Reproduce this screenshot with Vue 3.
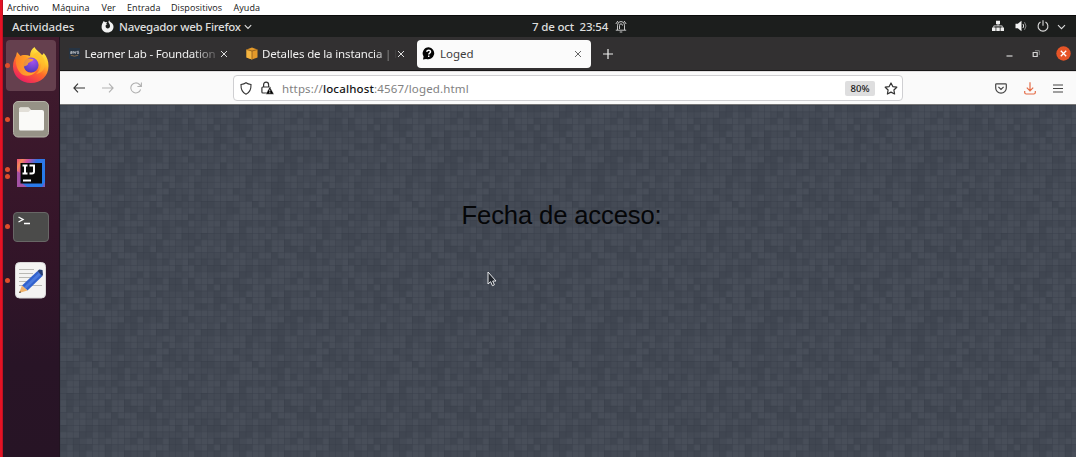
<script setup>
const menus = [
  { t: 'Archivo', w: 45 }, { t: 'Máquina', w: 49.5 }, { t: 'Ver', w: 25.5 },
  { t: 'Entrada', w: 44 }, { t: 'Dispositivos', w: 62.5 }, { t: 'Ayuda', w: 40 }
]
const cols = 25
const rows = 25
const cell = 6.4
let seed = 4711
const next = () => (seed = (seed * 48271) % 2147483647) / 2147483647
const light = []
const dark = []
for (let r = 0; r < rows; r++) {
  for (let c = 0; c < cols; c++) {
    const v = next()
    const d = `M${(c * cell).toFixed(1)} ${(r * cell).toFixed(1)}h6.4v6.4h-6.4z`
    if (v < 0.28) dark.push(d)
    else if (v > 0.64) light.push(d)
  }
}
const lightPath = light.join('')
const darkPath = dark.join('')
</script>

<template>
  <div class="screen">
    <div class="edge"></div>
    <div class="desktop">
      <nav class="menubar">
        <span v-for="m in menus" :key="m.t" :style="{ width: m.w + 'px' }">{{ m.t }}</span>
      </nav>

      <header class="topbar">
        <span class="act">Actividades</span>
        <svg class="fxmini" width="13" height="13" viewBox="0 0 13 13">
          <path d="M2.700.9 4.200 2.300C5 1.900 5.600 1.900 6.200 2L5.100 3.400 6.400 4.300C5.200 4.400 4.600 5.100 4.600 6.200c0 1.300.9 2.200 2.100 2.200 1.400 0 2.300-1 2.300-2.400C9 4.400 8 3.500 7.600 2.600 7.300 1.900 7.700.9 8.200.3c.3 1.500 1.300 1.700 2.200 2.400 1.300 1 2.100 2.300 2.100 4.100 0 3.300-2.600 5.800-5.900 5.800S.6 10.200.6 6.900C.6 4.500 1.600 2.800 2.700.9z" fill="#f2f2f2" />
        </svg>
        <span class="app">Navegador web Firefox</span>
        <svg class="chev" width="8" height="6" viewBox="0 0 8 6"><path d="M.8 1.200 4 4.500 7.200 1.200" fill="none" stroke="#ddd" stroke-width="1.100" /></svg>
        <span class="date">7 de oct&nbsp; 23:54</span>
        <svg class="bell" width="12" height="13" viewBox="0 0 12 13" fill="none" stroke="#d8d8d8">
          <path d="M.8 10.200h10.400M2.500 10V5.200a3.500 3.700 0 0 1 7 0V10M4.500 9V5.500a1.500 1.700 0 0 1 3 0M4.700 12h2.600M.8 4 2.800 1M11.200 4 9.200 1" stroke-width=".9" />
        </svg>
        <div class="tray">
          <svg width="12" height="12" viewBox="0 0 12 12"><path d="M4 .8h4v3.400H4zM0 7.600h3.600V11H0zM4.300 7.600h3.500V11H4.300zM8.500 7.600H12V11H8.500z" fill="#eee" /><path d="M6 4v2M1.800 8V5.900h8.400V8" fill="none" stroke="#ddd" stroke-width=".9" /></svg>
          <svg width="13" height="12" viewBox="0 0 13 12"><path d="M.5 3.800h2.300L6.500.8v10.400L2.800 8.200H.5z" fill="#f2f2f2" /><path d="M8 4q1.300 2 0 4" fill="none" stroke="#ddd" /><path d="M9.500 2.200q3 3.800 0 7.600" fill="none" stroke="#8b8b8b" /></svg>
          <svg width="12" height="12" viewBox="0 0 12 12" fill="none" stroke="#ddd" stroke-width="1.100"><path d="M3.500 2a4.900 4.900 0 1 0 5 0M6 .3v5.500" /></svg>
          <svg width="9" height="6" viewBox="0 0 9 6"><path d="M1 1.200 4.500 4.700 8 1.200" fill="none" stroke="#ddd" stroke-width="1.100" /></svg>
        </div>
      </header>

      <div class="work">
        <aside class="dock">
          <div class="slot current">
            <i class="dots"><b></b></i>
            <svg width="38" height="40" viewBox="0 0 38 40">
              <defs>
                <linearGradient id="flame" x1=".85" y1=".05" x2=".3" y2="1">
                  <stop offset="0" stop-color="#fff04d" /><stop offset=".3" stop-color="#ffc52b" /><stop offset=".58" stop-color="#ff6a2a" /><stop offset="1" stop-color="#ed1d62" />
                </linearGradient>
                <radialGradient id="globe" cx=".6" cy=".25" r=".8"><stop offset="0" stop-color="#a553ee" /><stop offset="1" stop-color="#4938b6" /></radialGradient>
                <linearGradient id="fox" x1="0" y1="0" x2="1" y2=".5"><stop offset="0" stop-color="#ff8426" /><stop offset="1" stop-color="#ffb629" /></linearGradient>
              </defs>
              <path d="M22.500 2C23.500 5 28 7 30 10c1.400-.4 1.700-2 1.700-2 3.500 4 4.800 8 4.800 13 0 10-7.500 17-17.500 17S1 31 1 21.500c0-5 1.800-8.500 3-10.500l1-4 3.500 4C10.500 9.500 15 9.500 18 11c0-4 1.500-7 4.500-9z" fill="url(#flame)" />
              <circle cx="19" cy="20" r="7.600" fill="url(#globe)" />
              <path d="M4.500 10.500 8.500 11c3-1.500 5.500-.8 7.500 2.200l5.500 1c-.5 2.300-4.500 2.500-5.500 4.300.2 2-2.500 2-4 3 .6 6 7 8 12 5-4 5-12 6-16 1C4 23 3 16 4.500 10.500z" fill="url(#fox)" opacity=".85" />
              <path d="M21 11c4 1 6.500 4 6.500 9 1-1 1-4 .5-6 2 6 0 12-4 15 6-1 9-5 9-10 0-6-4-9-6.500-12-2 0-4 1-5.500 4z" fill="#ffbd2c" opacity=".6" />
            </svg>
          </div>
          <div class="slot">
            <i class="dots"><b></b></i>
            <svg width="36" height="37" viewBox="0 0 36 37"><rect x=".5" y=".5" width="35" height="35.500" rx="4.500" fill="#969286" stroke="#b6b3a8" /><path d="M6 8q0-1.500 1.500-1.500h8L18 9h11q2 0 2 2v17q0 1.500-1.500 1.500h-22Q6 29.500 6 28z" fill="#fafaf8" /><path d="M6 8q0-1.500 1.500-1.500h8L17.500 9l-2 2H6z" fill="#e2dfd8" /></svg>
          </div>
          <div class="slot">
            <i class="dots two"><b></b><b></b></i>
            <svg width="28" height="28" viewBox="0 0 28 28">
              <defs><linearGradient id="ij" x1="0" y1="0" x2="1" y2=".6"><stop offset="0" stop-color="#e94a7c" /><stop offset=".15" stop-color="#f58959" /><stop offset=".3" stop-color="#d24f9f" /><stop offset=".55" stop-color="#3275e5" /><stop offset="1" stop-color="#267bea" /></linearGradient></defs>
              <path d="M0 0h28v28H0z" fill="url(#ij)" /><path d="M0 12 3 14v9l7 5H0z" fill="#a552a4" /><path d="M16 28h9l3-5v5z" fill="#795bb8" /><path d="M3.500 4H25v20.500H3.500z" fill="#090909" />
              <path d="M5.500 6.500h5M8 6.500v8M5.500 14.500h5M12.500 6.500h4.500v6q0 2-2 2h-2.500M6 21.500h8" fill="none" stroke="#fff" stroke-width="2" />
            </svg>
          </div>
          <div class="slot">
            <i class="dots"><b></b></i>
            <svg width="36" height="30" viewBox="0 0 36 30"><rect x=".5" y=".5" width="35" height="29" rx="3.500" fill="#4b4b4a" stroke="#686766" /><path d="m5.500 5 4.500 2.500L5.500 10M11 11.500h6" fill="none" stroke="#fff" stroke-width="1.400" /></svg>
          </div>
          <div class="slot">
            <i class="dots"><b></b></i>
            <svg width="31" height="37" viewBox="0 0 31 37"><rect x=".5" y=".5" width="30" height="35.500" rx="4" fill="#f4f3f2" stroke="#d9d7d8" /><path d="M4 7.500h15M4 11.500h14M4 15.500h12M4 19.500h9M4 23.500h23" stroke="#b9b8b4" stroke-width="1.200" /><path d="m22.500 9 5 5-15 14.500-5.500-5z" fill="#3161cd" /><path d="m24 10.500 2 2-15 14.300-2-1.700z" fill="#4a79dd" /><path d="m22.500 9 1.700-1.500 3.300.5.5 5-1 1z" fill="#243d73" /><path d="m7 23.500 5.500 5L4 31z" fill="#efb16a" /><path d="m5 29-1 2 2-.6z" fill="#333" /></svg>
          </div>
        </aside>

        <main class="browser">
          <div class="tabs">
            <div class="tab one">
              <svg width="11" height="11" viewBox="0 0 11 11"><rect width="11" height="11" fill="#263342" /><path d="M1.500 3.500h1.700v2H1.500v-1h1.700M4.300 3l.6 2.500.8-1.800.8 1.800.6-2.500M9.900 3.300H8.300v1h1.400v1.200H8.100" fill="none" stroke="#c7ccd1" stroke-width=".7" /><path d="M1.800 7.200q3.700 2 7.400 0" fill="none" stroke="#9c7545" stroke-width=".8" /></svg>
              <span class="label t1">Learner Lab - Foundation</span>
              <svg class="x" width="8" height="8" viewBox="0 0 8 8"><path d="m1 1 6 6M7 1 1 7" stroke="#ddd" /></svg>
            </div>
            <div class="tab two-tab">
              <svg width="12" height="13" viewBox="0 0 12 13"><path d="M.5 2.500 6 .5l5.500 2v8L6 12.500l-5.500-2z" fill="#e3992a" /><path d="M.5 2.500 6 4v8.500l-5.500-2z" fill="#f4b440" /><path d="M.8 2.600 6 4l5.200-1.400M6 4v8.300" fill="none" stroke="#7b4d17" stroke-width=".7" /></svg>
              <span class="label t2">Detalles de la instancia | E</span>
              <svg class="x" width="8" height="8" viewBox="0 0 8 8"><path d="m1 1 6 6M7 1 1 7" stroke="#ddd" /></svg>
            </div>
            <div class="tab active">
              <svg width="13" height="13" viewBox="0 0 13 13"><path d="M6.700.3a6 6 0 1 1-2.600 11.600L1 12.500l.6-3A6 6 0 0 1 6.700.3z" fill="#050505" /><path d="M4.700 4.900q.2-1.700 2-1.700t1.900 1.600c0 1.400-1.900 1.300-1.900 2.800M6.700 8.600v1.500" fill="none" stroke="#fff" stroke-width="1.400" /></svg>
              <span class="label t3">Loged</span>
              <svg class="x" width="8" height="8" viewBox="0 0 8 8"><path d="m1 1 6 6M7 1 1 7" stroke="#666" /></svg>
            </div>
            <svg class="plus" width="10" height="10" viewBox="0 0 10 10"><path d="M5 0v10M0 5h10" stroke="#eee" stroke-width="1.200" /></svg>
            <div class="wm">
              <svg width="7" height="8" viewBox="0 0 7 8"><path d="M.5 6h6" stroke="#d5d5d5" stroke-width="1.200" /></svg>
              <svg width="8" height="8" viewBox="0 0 8 8"><path d="M1.200 2.500h4v4h-4z" fill="none" stroke="#d5d5d5" stroke-width="1.200" /><path d="M3 .7h4.300V5" fill="none" stroke="#999" stroke-width=".8" /></svg>
              <svg width="15" height="15" viewBox="0 0 15 15"><circle cx="7.500" cy="7.500" r="7.200" fill="#e65427" /><path d="m4.800 4.800 5.400 5.400m0-5.400-5.400 5.400" stroke="#fff" stroke-width="1.300" /></svg>
            </div>
          </div>

          <div class="toolbar">
            <svg class="back" width="12" height="10" viewBox="0 0 12 10"><path d="M12 5H1M5 .7.9 5 5 9.300" fill="none" stroke="#333" stroke-width="1.100" /></svg>
            <svg class="fwd" width="12" height="10" viewBox="0 0 12 10"><path d="M0 5h11M7 .7 11.100 5 7 9.300" fill="none" stroke="#b1b1b1" stroke-width="1.100" /></svg>
            <svg class="reload" width="12" height="12" viewBox="0 0 12 12"><path d="M10.600 7.500A5 5 0 1 1 9.500 2.500L11 4M11.400.5v4h-4" fill="none" stroke="#b1b1b1" stroke-width="1.100" /></svg>
            <div class="url">
              <svg width="12" height="13" viewBox="0 0 12 13"><path d="M6 .8c1.500 1.100 3 1.500 5 1.700.2 5-1.500 8.200-5 9.700C2.500 10.700.8 7.500 1 2.500 3 2.300 4.500 1.900 6 .8z" fill="none" stroke="#333" stroke-width="1.100" /></svg>
              <svg class="lock" width="13" height="14" viewBox="0 0 13 14"><path d="M7 12H1.800q-.9 0-.9-1V7q0-1 .9-1h6.500q1 0 1 1M2.600 6V3.700q0-2.500 2.500-2.500t2.500 2.500V6" fill="none" stroke="#333" stroke-width="1.200" /><path d="m8.800 5.800 4.200 7.400H4.800z" fill="#000" stroke="#fff" stroke-width=".4" /><path d="M8.800 8.500v2M8.800 11.200v1" stroke="#fff" stroke-width=".9" /></svg>
              <span class="address">https://<b>localhost</b>:4567/loged.html</span>
              <span class="zoom">80%</span>
              <svg class="star" width="14" height="13" viewBox="0 0 14 13"><path d="m7 1 1.800 3.600 4 .6-2.900 2.800.7 4L7 10.100 3.400 12l.7-4-2.900-2.800 4-.6z" fill="none" stroke="#333" stroke-width="1.200" stroke-linejoin="round" /></svg>
            </div>
            <div class="actions">
              <svg width="12" height="11" viewBox="0 0 12 11"><path d="M1.500.8h9q.8 0 .8.8V5A5.300 5.200 0 0 1 .7 5V1.600q0-.8.8-.8zM3.400 3.900 6 6.400l2.600-2.500" fill="none" stroke="#444" stroke-width="1.200" /></svg>
              <svg width="12" height="13" viewBox="0 0 12 13"><path d="M6 .3v8.500M2.800 5.700 6 8.900l3.200-3.200M.7 9v1.500q0 1.500 1.500 1.500h7.600q1.500 0 1.500-1.500V9" fill="none" stroke="#e46b46" stroke-width="1.200" /></svg>
              <svg width="10" height="9" viewBox="0 0 10 9"><path d="M0 1h10M0 4.500h10M0 8h10" stroke="#444" stroke-width="1.100" /></svg>
            </div>
          </div>

          <section class="page">
            <svg class="texture" width="1017" height="354" viewBox="0 0 1017 354">
              <defs>
                <pattern id="tiles" width="160" height="160" patternUnits="userSpaceOnUse"><path :d="lightPath" fill="#484e59" /><path :d="darkPath" fill="#404651" /></pattern>
                <pattern id="grid" width="6.400" height="6.400" patternUnits="userSpaceOnUse"><path d="M0 .4h6.400M.4 0v6.400" stroke="#343a45" stroke-opacity=".42" stroke-width=".8" /></pattern>
              </defs>
              <path d="M0 0h1017v354H0z" fill="url(#tiles)" /><path d="M0 0h1017v354H0z" fill="url(#grid)" />
            </svg>
            <p class="headline">Fecha de acceso:</p>
            <svg class="pointer" width="11" height="17" viewBox="0 0 11 17"><path d="M1 1v12l2.600-2.300 1.800 4 2-.9-1.700-3.800H9z" fill="#20242b" stroke="#e5e7ea" stroke-width="1" /></svg>
          </section>
        </main>
      </div>
    </div>
  </div>
</template>

<style>
body { margin: 0; overflow: hidden; }
</style>

<style scoped>
.screen { width: 1076px; height: 457px; display: flex; overflow: hidden; background: #fff; font-family: "Noto Sans", "Open Sans", sans-serif; white-space: nowrap; }
svg { display: block; flex: none; }
.edge { width: 3px; background: linear-gradient(90deg, #e41224 65%, #9f1020); }
.desktop { flex: 1; display: flex; flex-direction: column; min-width: 0; }
.menubar { height: 15px; padding-left: 4px; display: flex; font: 9px/15px "Open Sans", sans-serif; letter-spacing: .08px; color: #161616; }
.menubar span { flex: none; }
.topbar { height: 22px; box-sizing: border-box; background: #1c1e1d; border-top: 1px solid #0a0b0b; display: flex; align-items: center; color: #dedede; font-size: 11.500px; font-weight: 500; }
.act, .app, .date { flex: none; line-height: 20px; }
.act { width: 89px; padding-left: 9px; letter-spacing: -.06px; }
.fxmini { margin-right: 5px; }
.app { width: 122px; letter-spacing: -.27px; }
.chev { margin-left: 3px; }
.date { width: 77px; margin-left: 280px; letter-spacing: -.18px; }
.bell { margin-left: 6px; }
.tray { margin-left: auto; padding-right: 10px; display: flex; align-items: center; gap: 10px; position: relative; }
.tray svg:first-child { margin-right: 1px; }
.tray svg:nth-child(2) { margin-right: -1px; }
.tray svg:nth-child(1), .tray svg:nth-child(2), .tray svg:nth-child(3) { transform: translate(2px, -1px); }
.work { flex: 1; display: flex; min-height: 0; }
.dock { width: 56.500px; flex: none; box-sizing: border-box; border-right: 1px solid #211320; background: linear-gradient(#421c2e, #351529 45%, #281426 78%, #271425); display: flex; flex-direction: column; align-items: center; gap: 3px; padding-top: 3px; }
.slot { width: 50px; height: 50.800px; border-radius: 4px; display: flex; align-items: center; justify-content: center; position: relative; flex: none; }
.current { background: #65404e; }
.dots { position: absolute; left: -1px; top: 0; bottom: 0; display: flex; flex-direction: column; justify-content: center; gap: 2px; }
.dots b { width: 5px; height: 5px; border-radius: 50%; background: #df4e2c; }
.browser { flex: 1; display: flex; flex-direction: column; min-width: 0; }
.tabs { height: 34px; box-sizing: border-box; background: #323031; border-bottom: 1px solid #171617; display: flex; align-items: center; }
.tab { display: flex; align-items: center; box-sizing: border-box; flex: none; color: #efefef; font-size: 11.500px; }
.one { width: 176.500px; padding-left: 9px; }
.two-tab { width: 181px; padding-left: 10px; }
.active { width: 174px; height: 28px; background: #fbfbfb; color: #3d3d3d; border-radius: 4px; padding-left: 5px; }
.label { line-height: 18px; margin-left: 5px; flex: none; }
.t1 { width: 131px; letter-spacing: -.22px; mask-image: linear-gradient(90deg, #000 82%, rgba(0, 0, 0, .2)); }
.t2 { width: 134px; margin-left: 4px; letter-spacing: -.14px; mask-image: linear-gradient(90deg, #000 84%, rgba(0, 0, 0, .1)); }
.t3 { width: 134px; }
.t1 + .x { margin-left: 4px; }
.t2 + .x { margin-left: 1px; }
.t3 + .x { margin-left: 0; }
.plus { margin-left: 12px; }
.wm { margin-left: auto; padding-right: 5px; display: flex; align-items: center; gap: 19px; }
.wm svg:last-child { margin-left: -3px; }
.toolbar { height: 34px; box-sizing: border-box; background: #fafafa; border-top: 1px solid #e1dfe0; border-bottom: 1px solid #777; display: flex; align-items: center; padding-left: 13px; }
.fwd { margin-left: 17px; }
.reload { margin-left: 16px; }
.url { width: 670px; height: 26px; box-sizing: border-box; margin-left: 91.500px; border: 1px solid #cfcfd2; border-radius: 4px; background: #fff; display: flex; align-items: center; padding-left: 6px; flex: none; }
.lock { margin-left: 9px; }
.address { margin-left: 8px; font-size: 11.500px; letter-spacing: .16px; color: #818181; }
.address b { font-weight: 500; color: #151515; }
.zoom { width: 30px; height: 15px; margin-left: auto; border-radius: 2px; background: #dededf; text-align: center; font: 500 9.500px/15px "Noto Sans", sans-serif; color: #171717; }
.star { margin: 0 4px 0 9px; }
.actions { margin-left: auto; padding-right: 13px; display: flex; align-items: center; gap: 17px; }
.page { flex: 1; min-height: 0; background: #444a55; position: relative; overflow: hidden; }
.texture { position: absolute; left: 0; top: 0; }
.headline { position: relative; margin: 95px 0 0 402px; font: 25.600px/30px "Liberation Sans", Arial, sans-serif; letter-spacing: -.12px; color: #050608; }
.pointer { position: absolute; left: 427px; top: 166px; }
</style>
